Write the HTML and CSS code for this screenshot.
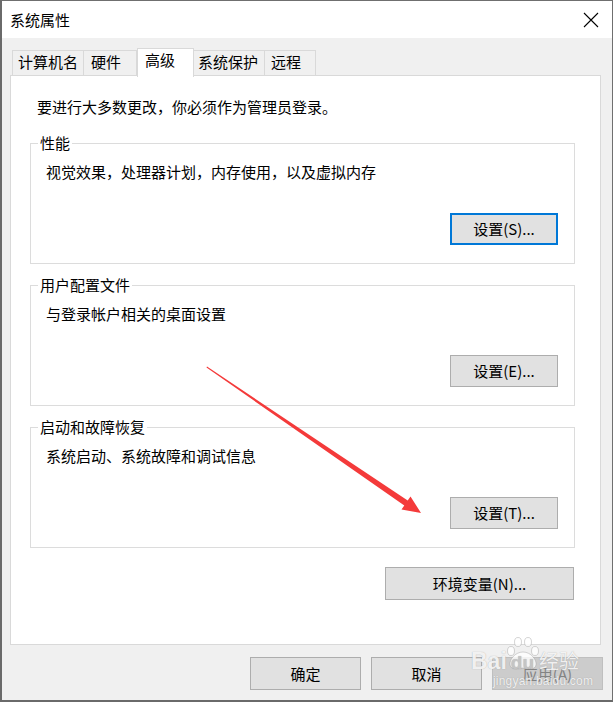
FILE: index.html
```html
<!DOCTYPE html>
<html lang="zh-CN">
<head>
<meta charset="utf-8">
<title>系统属性</title>
<link rel="stylesheet" href="styles.css">
</head>
<body>
<div class="window">
  <div class="titlebar">
    <span class="title">系统属性</span>
    <svg class="close" width="16" height="16" viewBox="0 0 16 16"><path d="M1 1 L15 15 M15 1 L1 15" stroke="#000" stroke-width="1.1" fill="none"/></svg>
  </div>
  <div class="client">
    <div class="tabs">
      <div class="tab t1">计算机名</div>
      <div class="tab t2">硬件</div>
      <div class="tab t3 active">高级</div>
      <div class="tab t4">系统保护</div>
      <div class="tab t5">远程</div>
    </div>
    <div class="panel">
      <div class="intro">要进行大多数更改，你必须作为管理员登录。</div>
      <div class="group">
        <div class="legend">性能</div>
        <div class="desc">视觉效果，处理器计划，内存使用，以及虚拟内存</div>
        <div class="btnrow"><div class="btn focus">设置(S)...</div></div>
      </div>
      <div class="group">
        <div class="legend">用户配置文件</div>
        <div class="desc">与登录帐户相关的桌面设置</div>
        <div class="btnrow"><div class="btn">设置(E)...</div></div>
      </div>
      <div class="group">
        <div class="legend">启动和故障恢复</div>
        <div class="desc">系统启动、系统故障和调试信息</div>
        <div class="btnrow"><div class="btn">设置(T)...</div></div>
      </div>
      <div class="envrow"><div class="btn env">环境变量(N)...</div></div>
    </div>
    <div class="footer">
      <div class="btn dlg">确定</div>
      <div class="btn dlg">取消</div>
      <div class="btn dlg disabled">应用(A)</div>
    </div>
  </div>
  <svg class="arrow" width="613" height="702" viewBox="0 0 613 702">
    <polygon points="207,366.5 407.7,500.5 410.5,496.4 421,513 401.5,509.6 404.3,505.5 206.5,367.5" fill="#f43a3a"/>
  </svg>
  <div class="watermark">
    <svg class="paw" width="40" height="36" viewBox="0 0 40 36">
      <g fill="rgba(255,255,255,0.8)" stroke="rgba(150,150,150,0.5)" stroke-width="0.8">
        <ellipse cx="8" cy="16" rx="3.5" ry="4.5"/>
        <ellipse cx="15" cy="7" rx="3.5" ry="4.5"/>
        <ellipse cx="25" cy="7" rx="3.5" ry="4.5"/>
        <ellipse cx="32" cy="16" rx="3.5" ry="4.5"/>
        <path d="M20 17 C12 17 6 25 7 30 C8 35 14 34 20 33 C26 34 32 35 33 30 C34 25 28 17 20 17 Z"/>
      </g>
    </svg>
    <div class="wm-main"><span class="wm-bai">Bai</span><span class="wm-du">du</span><span class="wm-jy">经验</span></div>
    <div class="wm-url">jingyan.baidu.com</div>
  </div>
</div>
</body>
</html>
```

FILE: styles.css
```css
* { box-sizing: border-box; }
html, body { margin: 0; padding: 0; }
body {
  font-family: "Noto Sans CJK SC", "Liberation Sans", sans-serif;
  font-size: 15px;
  line-height: 20px;
  color: #000;
  background: #fff;
}
.window {
  position: relative;
  width: 613px;
  height: 702px;
  border: 1px solid #6f6f6f;
  border-left: 2px solid #6a6a6a;
  border-bottom: 2px solid #6a6a6a;
  background: #f0f0f0;
  overflow: hidden;
}
.titlebar {
  height: 37px;
  background: #fff;
  display: flex;
  align-items: center;
  justify-content: space-between;
  padding: 0 13px 0 8px;
}
.title { padding-top: 1px; }
.close { margin-top: 1px; }
.client { padding: 10px 0 0 8px; }
.tabs {
  display: flex;
  align-items: flex-end;
  height: 28px;
  margin-left: 2px;
}
.tab {
  height: 26px;
  border: 1px solid #d9d9d9;
  border-bottom: none;
  background: #f0f0f0;
  padding: 1px 0 0 5px;
  white-space: nowrap;
}
.t1 { width: 72px; }
.t2 { width: 54px; margin-left: -1px; padding-left: 7px; }
.t3 { width: 57px; padding-left: 7px; }
.t4 { width: 72px; margin-left: -1px; padding-left: 4px; }
.t5 { width: 52px; margin-left: -1px; padding-left: 6px; }
.tab.active {
  height: 29px;
  margin-bottom: -1px;
  background: #fff;
  position: relative;
  z-index: 2;
}
.panel {
  position: relative;
  z-index: 1;
  width: 591px;
  height: 570px;
  margin-top: -1px;
  background: #fff;
  border: 1px solid #d9d9d9;
  padding: 21px 25px 0 19px;
}
.intro { padding-left: 7px; }
.group {
  margin-top: 21px;
  border: 1px solid #dcdcdc;
  padding: 0 16px 18px 15px;
}
.intro + .group { margin-top: 26px; }
.legend {
  display: table;
  margin: -11px 0 0 -8px;
  padding: 0 2px;
  background: #fff;
}
.desc { margin-top: 9px; }
.btnrow {
  display: flex;
  justify-content: flex-end;
  margin-top: 31px;
}
.btn {
  display: flex;
  align-items: center;
  justify-content: center;
  height: 32px;
  background: #e1e1e1;
  border: 1px solid #adadad;
  white-space: nowrap;
}
.btnrow .btn { width: 108px; }
.btn.focus { border: 2px solid #0078d7; }
.envrow {
  display: flex;
  justify-content: flex-end;
  margin-top: 19px;
  padding-right: 1px;
}
.btn.env { width: 189px; height: 33px; }
.footer {
  display: flex;
  justify-content: flex-end;
  gap: 10px;
  margin-top: 12px;
  padding-right: 9px;
}
.btn.dlg { width: 111px; height: 33px; }
.btn.disabled {
  background: #cccccc;
  border-color: #bfbfbf;
  color: #838383;
}
.arrow {
  position: absolute;
  left: -2px;
  top: -1px;
  pointer-events: none;
  z-index: 5;
}
.watermark {
  position: absolute;
  left: 469px;
  top: 634px;
  width: 115px;
  height: 56px;
  z-index: 6;
  color: rgba(255, 255, 255, 0.85);
  text-shadow: 0 0 1px rgba(120, 120, 120, 0.6);
  font-family: "Liberation Sans", "Noto Sans CJK SC", sans-serif;
  pointer-events: none;
}
.paw {
  position: absolute;
  left: 32px;
  top: 0;
}
.wm-main {
  position: absolute;
  left: 0;
  top: 14px;
  display: flex;
  align-items: baseline;
  font-size: 23px;
  line-height: 24px;
  font-weight: bold;
}
.wm-du {
  font-size: 19px;
  margin-left: 4px;
  color: rgba(200, 200, 200, 0.9);
  position: relative;
  z-index: 1;
}
.wm-jy {
  font-family: "Noto Sans CJK SC", sans-serif;
  font-size: 20px;
  margin-left: 5px;
  font-weight: normal;
}
.wm-url {
  position: absolute;
  left: 22px;
  top: 40px;
  font-size: 12px;
  line-height: 12px;
  letter-spacing: 0.2px;
}
```
